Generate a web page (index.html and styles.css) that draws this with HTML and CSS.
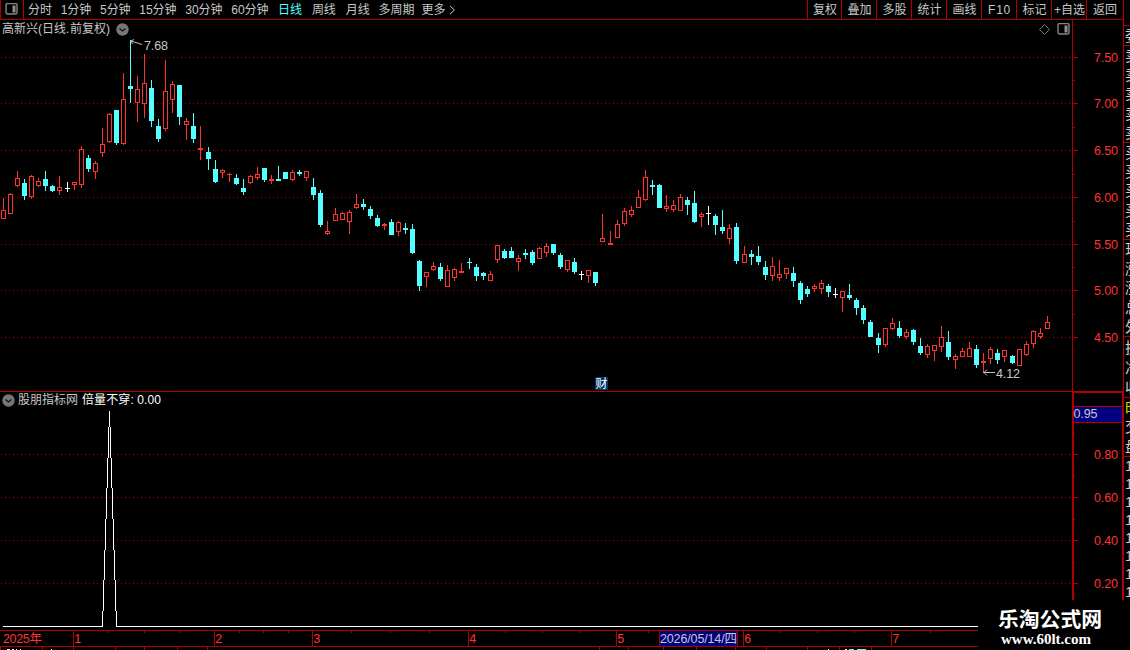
FILE: index.html
```html
<!DOCTYPE html>
<html lang="zh-CN">
<head>
<meta charset="utf-8">
<title>高新兴 日线</title>
<link rel="stylesheet" href="styles.css">
</head>
<body>
<div class="app">
  <div class="workspace">
    <div class="toolbar">
      <div class="layout-button">
        <svg class="panel-icon" width="13" height="12" viewBox="0 0 13 12"><rect class="icon-frame" x="1" y=".5" width="11" height="10.5" rx="1.5"/><rect class="icon-fill" x="7.500" y="2.500" width="3" height="7"/></svg>
      </div>
      <div class="periods">
        <span class="period">分时</span><span class="period">1分钟</span><span class="period">5分钟</span><span class="period">15分钟</span><span class="period">30分钟</span><span class="period">60分钟</span><span class="period wide active">日线</span><span class="period wide">周线</span><span class="period wide">月线</span><span class="period">多周期</span><span class="period more">更多<svg class="chevron" width="7" height="10" viewBox="0 0 7 10"><path d="M1 1l4.500 4L1 9"/></svg></span>
      </div>
      <div class="actions">
        <span class="action first">复权</span><span class="action">叠加</span><span class="action">多股</span><span class="action">统计</span><span class="action">画线</span><span class="action f10">F10</span><span class="action">标记</span><span class="action">+自选</span><span class="action last">返回</span>
      </div>
    </div>
    <div class="panel price-panel">
      <div class="plot">
        <div class="plot-head">
          <span>高新兴<span class="narrow">(</span>日线<span class="narrow">.</span>前复权<span class="narrow">)</span></span>
          <svg class="round-icon" width="13" height="13" viewBox="0 0 13 13"><circle cx="6.500" cy="6.500" r="6.200"/><path d="M3.500 5.500l3 2.500 3-2.500"/></svg>
          <svg class="diamond" width="11" height="11" viewBox="0 0 11 11"><path d="M5.500 .5l5 5-5 5-5-5z"/></svg>
          <svg class="panel-icon" width="13" height="12" viewBox="0 0 13 12"><rect class="icon-frame" x="1" y=".5" width="11" height="10.500" rx="1.500"/><rect class="icon-fill" x="7.500" y="2.500" width="3" height="7"/></svg>
        </div>
        <svg id="price-chart" class="chart" width="1072" height="371" viewBox="0 20 1072 371"></svg>
      </div>
      <svg id="price-axis" class="axis" width="51" height="371" viewBox="1072 20 51 371"></svg>
    </div>
    <div class="panel signal-panel">
      <div class="plot">
        <div class="plot-head signal-head">
          <svg class="round-icon" width="13" height="13" viewBox="0 0 13 13"><circle cx="6.500" cy="6.500" r="6.200"/><path d="M3.500 5.500l3 2.500 3-2.500"/></svg>
          <span class="source">股朋指标网</span><span class="reading">倍量不穿: 0.00</span>
        </div>
        <svg id="signal-chart" class="chart" width="1072" height="238" viewBox="0 392 1072 238"></svg>
      </div>
      <svg id="signal-axis" class="axis" width="51" height="238" viewBox="1072 392 51 238"></svg>
    </div>
    <svg id="time-axis" class="time-axis" width="1123" height="20" viewBox="0 630 1123 20"></svg>
  </div>
  <div class="quotes">
    <div class="quote-group gap"></div>
    <div class="quote-group single"><b>委</b></div>
    <div class="quote-group five"><b>卖</b><b>卖</b><b>卖</b><b>卖</b><b>卖</b></div>
    <div class="quote-group five"><b>买</b><b>买</b><b>买</b><b>买</b><b>买</b></div>
    <div class="quote-group five"><b>现</b><b>涨</b><b>涨</b><b>总</b><b>外</b></div>
    <div class="quote-group three"><b>换</b><b>净</b><b>收</b></div>
    <div class="quote-group tabs"><b class="tab-on">时</b><b>交</b><b>盘</b></div>
    <div class="quote-group ticks"><b>1</b><b>1</b><b>1</b><b>1</b><b>1</b><b>1</b><b>1</b><b>1</b></div>
  </div>
  <div class="site-mark"><div class="site-name">乐淘公式网</div><div class="site-url">www.60lt.com</div></div>
</div>
<script src="chart.js"></script>
</body>
</html>
```

FILE: styles.css
```css
* { box-sizing: border-box; }
body { margin: 0; background: #000; overflow: hidden; }
.app {
  position: relative;
  display: flex;
  width: 1130px;
  height: 650px;
  overflow: hidden;
  background: #000;
  color: #c8c8c8;
  font: 12px/18px "Liberation Sans", "Noto Sans CJK SC", sans-serif;
}
svg { display: block; }
.workspace { width: 1123px; flex: none; display: flex; flex-direction: column; }
.toolbar { height: 20px; display: flex; border-bottom: 1px solid #b00000; white-space: nowrap; line-height: 20px; }
.layout-button { width: 24px; padding: 3px 0 0 4px; border: solid #b00000; border-width: 0 1px; }
.icon-frame { fill: none; stroke: #858585; stroke-width: 1.4; }
.icon-fill { fill: #909090; }
.periods { display: flex; flex: 1; padding-left: 4px; }
.period { margin-right: 8.8px; letter-spacing: -.05px; }
.period.wide { margin-right: 9.9px; }
.period:nth-child(6) { margin-right: 9.7px; }
.period:nth-child(9) { margin-right: 9px; }
.period:nth-child(10) { margin-right: 7px; }
.active { color: #54ffff; }
.more { display: flex; align-items: center; gap: 4px; }
.chevron { fill: none; stroke: #c0c0c0; }
.actions { display: flex; }
.action { width: 35px; padding-left: 1px; border-left: 1px solid #b00000; text-align: center; }
.action.first { width: 34px; }
.action.last { width: 37px; padding-left: 0; }
.f10 { letter-spacing: .7px; }
.panel { display: flex; border-bottom: 1px solid #b00000; }
.price-panel { height: 372px; }
.signal-panel { height: 238px; border-bottom: 0; }
.plot { display: grid; width: 1072px; }
.plot > * { grid-area: 1 / 1; }
.plot-head { display: flex; height: 18px; align-items: center; padding-left: 2px; white-space: nowrap; }
.narrow { display: inline-block; width: 4px; }
.plot-head .round-icon { margin-left: 6px; }
.round-icon circle { fill: #777; }
.round-icon path { fill: none; stroke: #111; stroke-width: 1.3; }
.diamond { margin-left: auto; margin-right: 7px; fill: none; stroke: #777; }
.price-panel .panel-icon { margin-right: 2px; }
.signal-head { height: 16px; padding-left: 0; }
.signal-head .round-icon { margin: 0 3px 0 2px; }
.source { width: 64px; }
.reading { color: #fff; letter-spacing: .1px; }
.bar-up { fill: #ff3232; }
.bar-down { fill: #54ffff; }
.bar-flat { fill: #fff; }
.hollow { fill: #000; stroke: #ff3232; }
.grid { stroke: #b00000; stroke-dasharray: 1 3; }
.rule { fill: #b00000; }
.note { fill: #c8c8c8; font-size: 12.5px; }
.pointer { fill: none; stroke: #c0c0c0; }
.event-box { fill: #003868; }
.event-text { fill: #fff; font-size: 12px; }
.scale { fill: #ff3232; font-size: 12.5px; }
.cursor-box { fill: #000080; }
.signal-line { fill: #fff; }
.quotes { width: 7px; border-left: 1px solid #b00000; overflow: hidden; }
.quote-group { display: flex; flex-direction: column; justify-content: space-around; width: 20px; padding-left: 1px; border-bottom: 1px solid #b00000; overflow: hidden; }
.quote-group b { display: block; font-weight: 400; font-size: 15px; line-height: 17px; color: #d0d0d0; }
.gap { height: 26px; }
.single { height: 20px; }
.five { height: 97px; }
.three { height: 61px; }
.tabs { height: 59px; }
.quote-group .tab-on { color: #dddd00; }
.ticks { height: 144px; border-bottom: 0; }
.ticks b { height: 18px; }
.site-mark { position: absolute; left: 978px; top: 600px; width: 152px; height: 50px; background: #000; color: #fff; font-weight: 700; white-space: nowrap; }
.site-name { padding: 6px 0 0 20px; font: 700 20.8px/24px "Noto Sans CJK SC", sans-serif; }
.site-url { padding: 1px 0 0 23px; font: 700 15px/17px "Liberation Serif", serif; }
```

FILE: chart.js
```js
const NS = 'http://www.w3.org/2000/svg';
function add(svg, tag, attrs, text) {
  const el = document.createElementNS(NS, tag);
  for (const key in attrs) el.setAttribute(key, attrs[key]);
  if (text !== undefined) el.textContent = text;
  svg.appendChild(el);
}
const box = (svg, cls, x, y, width, height) => add(svg, 'rect', { class: cls, x, y, width, height });
const label = (svg, cls, x, y, text, length) => {
  const attrs = { class: cls, x, y };
  if (length) attrs.textLength = length;
  add(svg, 'text', attrs, text);
};

// Each candle: kind, centre x, high, body top, body bottom, low (r = up, c = down, w = flat).
const candles = `r3,198,210,219,219 r10,193,194,214,214 r17,171,178,186,187 c24,179,183,196,200 r31,175,176,197,199
r38,178,181,186,187 c45,171,179,186,191 c52,185,186,191,192 r59,176,187,191,195 w67,182,188,189,192
r74,182,182,185,190 r81,146,149,185,188 c88,155,158,169,172 r95,161,163,172,179 r102,128,144,153,157
r109,113,114,142,143 c116,110,110,143,145 r123,73,99,144,145 c130,40,86,89,103 r137,76,89,103,122
r144,54,83,104,118 c151,80,88,121,127 c158,119,126,139,142 r165,60,91,129,131 r172,81,84,100,113
c179,85,85,117,125 r186,118,121,125,140 c193,113,126,139,143 r200,126,148,150,160 c208,147,152,159,170
c215,160,169,182,183 r222,169,170,173,178 r229,173,174,175,182 c236,174,178,184,185 c243,179,188,192,195
r250,175,176,183,184 r257,167,174,178,180 c264,168,168,180,182 r271,175,179,181,184 c278,166,179,181,181
c285,172,172,179,179 r292,170,172,180,181 c299,170,172,174,176 r306,171,171,178,181 c313,178,187,195,200
c320,190,193,225,227 r327,221,231,234,235 r335,208,214,221,221 r342,212,213,220,220 r349,210,212,222,234
r356,194,204,208,209 c363,199,204,207,210 c370,206,209,216,219 c377,215,218,226,227 r384,223,224,226,230
c391,219,222,235,235 r398,221,222,232,236 c405,223,228,230,234 c412,224,229,253,254 c419,260,261,286,291
r426,272,272,277,287 r433,262,266,270,271 c440,263,267,279,281 r447,265,270,287,287 r454,268,269,278,281
r461,263,271,273,273 c469,258,262,263,269 c476,264,267,276,281 c483,272,273,276,280 r490,271,274,281,281
r497,245,245,260,263 c504,249,251,258,259 c511,247,251,258,258 r518,255,258,262,271 c525,249,253,255,259
c532,250,252,263,265 r539,247,248,259,259 r546,243,246,253,257 c553,244,244,253,255 c560,253,255,267,269
r567,260,260,270,272 c574,258,262,272,274 w581,271,274,275,280 r588,270,270,276,283 c595,272,272,283,286
r602,214,238,242,242 r610,231,243,245,245 r617,220,224,238,238 r624,208,211,224,226 r631,206,210,215,217
r638,190,197,208,208 r645,170,177,200,201 c652,180,185,187,195 c659,184,185,208,208 r666,195,206,209,212
r673,200,205,210,212 r680,194,197,211,211 c687,197,200,205,215 c694,191,203,222,223 r701,212,214,217,227
w708,206,213,214,225 c715,214,216,225,235 c722,210,227,231,234 r729,224,228,239,244 c736,223,227,261,264
r744,246,254,263,263 c751,250,254,257,265 c758,246,256,262,265 c765,261,267,275,280 r772,257,266,276,281
r779,260,274,278,281 r786,268,268,274,279 c793,267,273,281,287 c800,281,283,300,304 c807,286,289,294,297
r814,284,286,289,292 r821,280,283,289,294 c828,284,286,292,297 w835,288,294,295,298 r842,291,291,298,312
c849,284,295,298,300 c856,298,300,308,315 c863,305,308,320,324 c870,320,322,337,337 c878,333,338,345,353
r885,328,328,345,347 r892,318,323,329,330 c899,321,328,336,338 r906,329,332,337,339 c913,329,330,342,345
c920,338,346,353,355 r927,344,346,355,358 r934,345,345,351,361 r941,326,337,347,352 c948,331,342,357,360
r955,354,356,360,369 r962,348,351,357,357 r969,342,348,357,357 c976,345,349,365,368 r983,353,361,363,372
r990,347,349,359,364 c997,349,353,360,364 r1004,350,350,357,362 c1012,355,356,363,364 r1019,349,349,366,366
r1026,341,344,355,356 r1033,330,331,344,348 r1040,328,333,337,339 r1047,316,322,329,329`.split(/\s+/);

const price = document.getElementById('price-chart');
const priceRows = [57, 103, 150, 197, 244, 290, 337];
priceRows.forEach(y => add(price, 'path', { class: 'grid', d: `M1 ${y + .5}H1072` }));
const kinds = { r: 'bar-up', c: 'bar-down', w: 'bar-flat' };
candles.forEach(entry => {
  const cls = kinds[entry[0]];
  const [x, high, top, bottom, low] = entry.slice(1).split(',').map(Number);
  box(price, cls, x, high, 1, low - high);
  if (entry[0] === 'r' && bottom - top > 2) {
    box(price, 'hollow', x - 1.5, top + .5, 4, bottom - top - 1);
  } else {
    box(price, cls, x - 2, top, 5, bottom - top);
  }
});
add(price, 'path', { class: 'pointer', d: 'M142 44.500L131 41M134 39.500L131 41L132.500 44' });
label(price, 'note', 144, 50, '7.68', 24);
add(price, 'path', { class: 'pointer', d: 'M995 372.500H983M987 369.500L984 372.500L987 375.500' });
label(price, 'note', 996, 378, '4.12', 24);
box(price, 'event-box', 595, 377, 13, 13);
label(price, 'event-text', 595.5, 388, '财');

const priceAxis = document.getElementById('price-axis');
box(priceAxis, 'rule', 1072, 20, 1, 371);
priceRows.forEach((y, i) => {
  box(priceAxis, 'rule', 1073, y, 5, 1);
  label(priceAxis, 'scale', 1094, y + 5, (7.5 - i * .5).toFixed(2), 24);
});
[80, 127, 174, 221, 267, 314].forEach(y => box(priceAxis, 'rule', 1073, y, 2, 1));

const signal = document.getElementById('signal-chart');
const signalRows = [454, 497, 540, 583];
signalRows.forEach(y => add(signal, 'path', { class: 'grid', d: `M1 ${y + .5}H1072` }));
const steps = [411, 427, 458, 488, 519, 550, 580, 611, 627];
for (let i = 0; i < 8; i++) {
  const height = steps[i + 1] - steps[i];
  box(signal, 'signal-line', 109 - i, steps[i], 1, height);
  box(signal, 'signal-line', 109 + i, steps[i], 1, height);
}
box(signal, 'signal-line', 3, 626, 100, 1);
box(signal, 'signal-line', 116, 626, 956, 1);

const signalAxis = document.getElementById('signal-axis');
box(signalAxis, 'rule', 1072, 392, 2, 238);
box(signalAxis, 'rule', 1072, 392, 51, 1);
box(signalAxis, 'rule', 1122, 392, 1, 238);
box(signalAxis, 'rule', 1074, 406, 48, 17);
box(signalAxis, 'cursor-box', 1074, 407, 48, 15);
label(signalAxis, 'note', 1073.5, 418, '0.95', 24);
signalRows.forEach((y, i) => {
  box(signalAxis, 'rule', 1074, y, 4, 1);
  label(signalAxis, 'scale', 1094, y + 5, (.8 - i * .2).toFixed(2), 24);
});
[433, 476, 519, 562].forEach(y => box(signalAxis, 'rule', 1074, y, 1, 1));

const time = document.getElementById('time-axis');
box(time, 'rule', 0, 630, 1123, 1);
box(time, 'rule', 0, 646, 1123, 1);
[[73, '1'], [214, '2'], [312, '3'], [468, '4'], [616, '5'], [743, '6'], [891, '7']].forEach(([x, month]) => {
  box(time, 'rule', x, 631, 1, 15);
  label(time, 'scale', x + 1.3, 643, month);
});
label(time, 'scale', 3, 643, '2025年', 39);
[108, 144, 179, 239, 263, 288, 351, 390, 429, 505, 542, 579, 648, 780, 817, 854, 930].forEach(x => box(time, 'rule', x, 631, 1, 2));
box(time, 'rule', 659, 631, 79, 15);
box(time, 'cursor-box', 660, 631, 77, 15);
label(time, 'note', 660, 642.5, '2026/05/14/四', 77);
[0, 42, 73, 115, 144, 177, 207, 599, 628, 663, 696, 735, 766, 807, 839, 871].forEach(x => box(time, 'rule', x, 647, 1, 3));
[[7, 3], [12, 2], [16, 1], [20, 1], [51, 1], [828, 1], [845, 2]].forEach(([x, w]) => box(time, 'signal-line', x, 649, w, 1));
box(time, 'bar-down', 849, 649, 5, 1);
box(time, 'bar-down', 857, 649, 9, 1);
```
